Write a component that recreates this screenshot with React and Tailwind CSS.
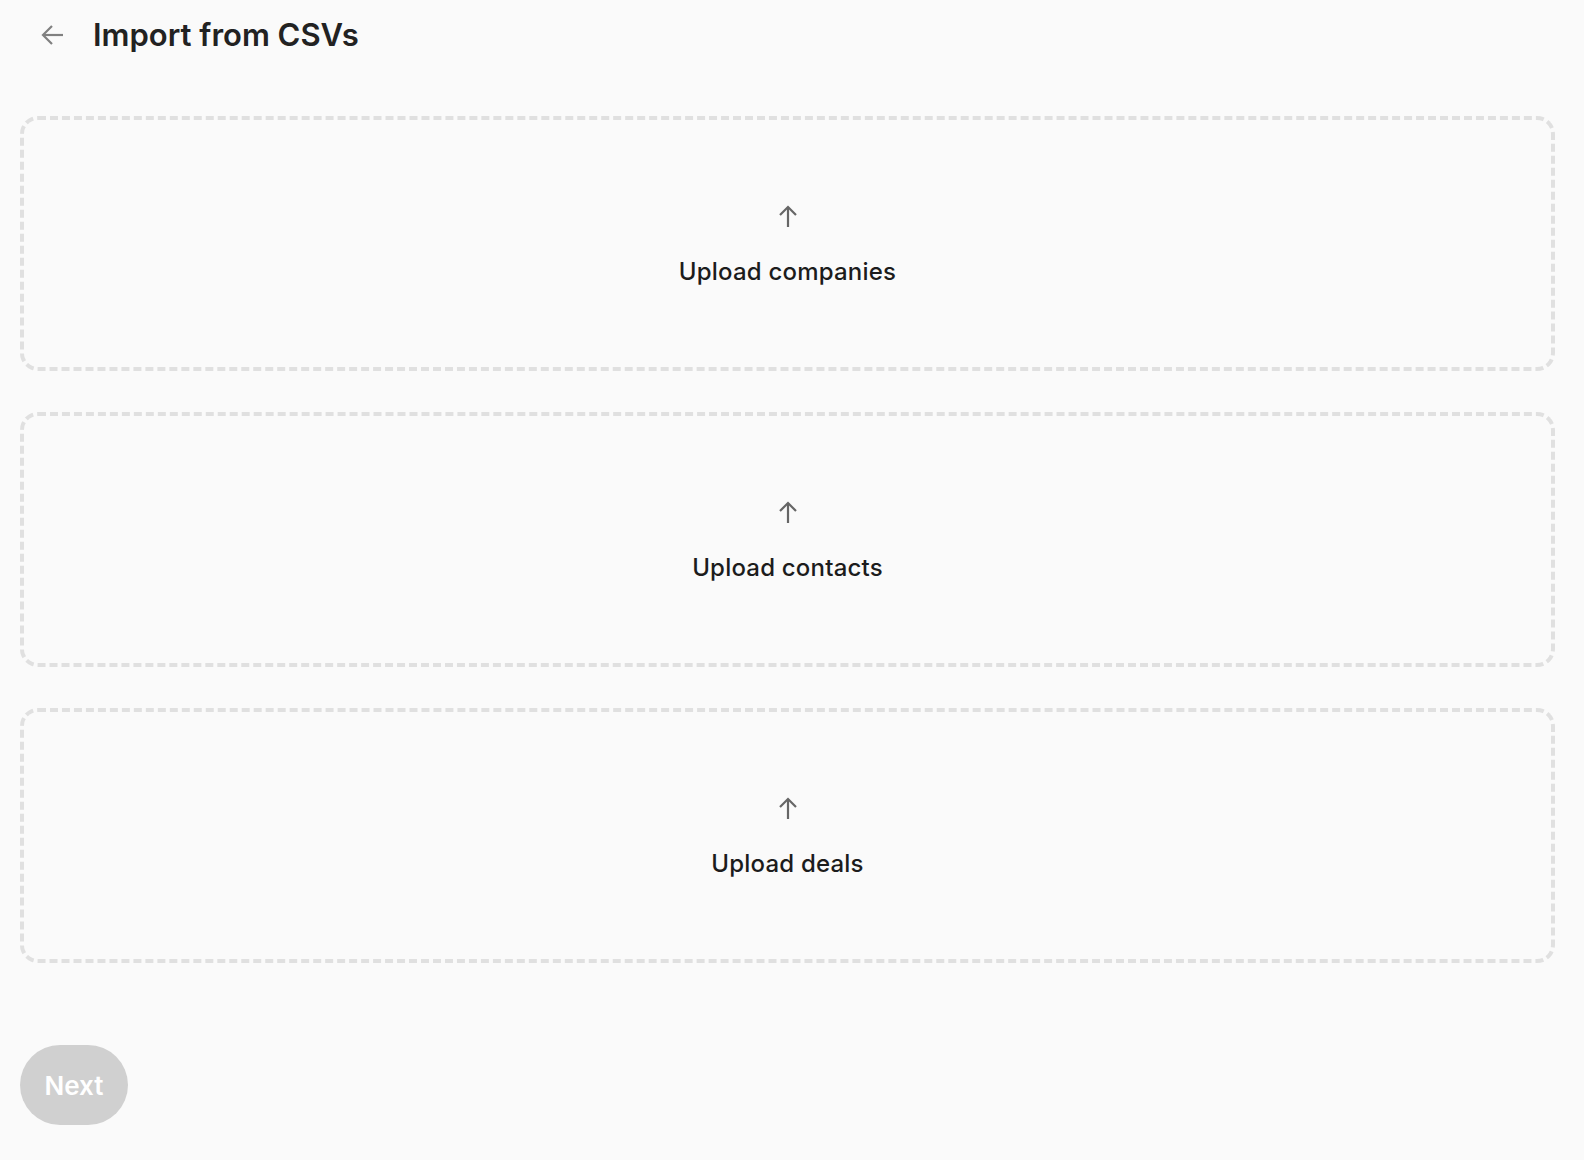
import React from 'react';

const UpArrow = () => (
  <svg width="20" height="22" viewBox="0 0 20 22" fill="none" stroke="#666666" strokeWidth="2.2" strokeLinecap="butt" strokeLinejoin="miter">
    <path d="M10 2.5V22" />
    <path d="M2 10L10 2L18 10" />
  </svg>
);

const UploadBox = ({ label }) => (
  <div className="h-[255px] pt-[4px] rounded-[18px] border-[4px] border-dashed border-[#e0e0e0] flex flex-col items-center justify-center">
    <UpArrow />
    <p className="mt-[29px] text-[24px] leading-[31px] font-medium tracking-[0.2px] text-[#1c1c1c]">{label}</p>
  </div>
);

export default function App() {
  return (
    <div className="min-h-screen bg-[#fafafa] pl-[20px] pr-[29px] pb-10" style={{ fontFamily: 'Inter, "Noto Sans", sans-serif' }}>
      {/* Header */}
      <div className="h-[70px] flex items-center pl-[21px] gap-[30px]">
        <svg width="22" height="20" viewBox="0 0 22 20" fill="none" stroke="#808080" strokeWidth="2.2">
          <path d="M2 10H22" />
          <path d="M11 1L2 10L11 19" />
        </svg>
        <h1 className="text-[31px] font-semibold text-[#222222]">Import from CSVs</h1>
      </div>

      {/* Upload areas */}
      <div className="mt-[46px] flex flex-col gap-[41px]">
        <UploadBox label="Upload companies" />
        <UploadBox label="Upload contacts" />
        <UploadBox label="Upload deals" />
      </div>

      {/* Footer */}
      <div className="mt-[82px]">
        <button
          type="button"
          disabled
          className="h-[80px] w-[108px] rounded-full bg-[#d0d0d0] text-white text-[26px] font-semibold"
        >
          Next
        </button>
      </div>
    </div>
  );
}
